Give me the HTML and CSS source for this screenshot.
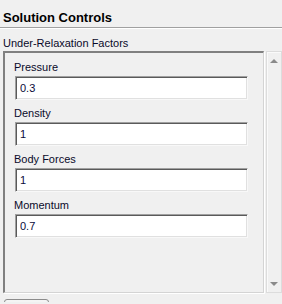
FILE: index.html
```html
<!DOCTYPE html>
<html lang="en">
<head>
<meta charset="UTF-8"/>
<title>Solution Controls</title>
<link rel="stylesheet" href="styles.css">
</head>
<body>

<header class="title">Solution Controls</header>

<div class="section-label">Under-Relaxation Factors</div>

<div class="group">
  <div class="panel">
    <label class="field">
      <span>Pressure</span>
      <input type="text" value="0.3">
    </label>
    <label class="field">
      <span>Density</span>
      <input type="text" value="1">
    </label>
    <label class="field">
      <span>Body Forces</span>
      <input type="text" value="1">
    </label>
    <label class="field">
      <span>Momentum</span>
      <input type="text" value="0.7">
    </label>
  </div>
  <div class="scroll">
    <div class="arrow up"></div>
    <div class="arrow down"></div>
  </div>
</div>

<div class="footer">
  <button class="help-btn" aria-label="Help"></button>
</div>

</body>
</html>
```

FILE: styles.css
```css
body { margin:0; background:#f0f0f0; font-family:"Liberation Sans",Arial,sans-serif; font-size:11px; color:#0a0a2a; overflow:hidden; height:304px; }
.title { font-weight:bold; font-size:13px; color:#000; padding:10px 0 0 3px; height:17px; border-bottom:1px solid #a0a0a0; box-shadow:0 1px 0 #fff; }
.section-label { padding:9px 0 0 3px; height:14px; }
.group { display:flex; gap:1px; margin:0 0 0 3px; height:242px; }
.panel { width:250px; border-top:2px solid #808080; border-left:2px solid #808080; border-right:1px solid #d4d4d4; border-bottom:1px solid #d4d4d4; box-shadow:1px 1px 0 #fff; padding:7px 8px 0 8px; display:flex; flex-direction:column; gap:6px; }
.field { display:flex; flex-direction:column; gap:2px; }
.field span { padding-left:1px; line-height:14px; }
.field input { height:24px; box-sizing:border-box; margin:0 0 0 2px; width:233px; font:11px "Liberation Sans",Arial,sans-serif; color:#0a0a3a; background:#fff; padding:0 4px; border-top:1px solid #a0a0a0; border-left:1px solid #a0a0a0; border-right:1px solid #f8f8f8; border-bottom:1px solid #f8f8f8; box-shadow:inset 1px 1px 0 #5a5a5a, inset -1px -1px 0 #e0e0e0; outline:none; }
.scroll { width:15px; margin-left:1px; border:1px solid #dcdcdc; box-shadow:inset 1px 1px 0 #fafafa; display:flex; flex-direction:column; justify-content:space-between; align-items:center; padding:7px 0 6px; }
.arrow { width:0; height:0; border-left:4px solid transparent; border-right:4px solid transparent; }
.arrow.up { border-bottom:4px solid #8a8a8a; }
.arrow.down { border-top:4px solid #8a8a8a; }
.footer { height:9px; overflow:hidden; padding:6px 0 0 4px; box-sizing:border-box; }
.help-btn { display:block; width:45px; height:24px; background:#f4f4f4; border:1px solid #8c8c8c; border-radius:3px; }
```
